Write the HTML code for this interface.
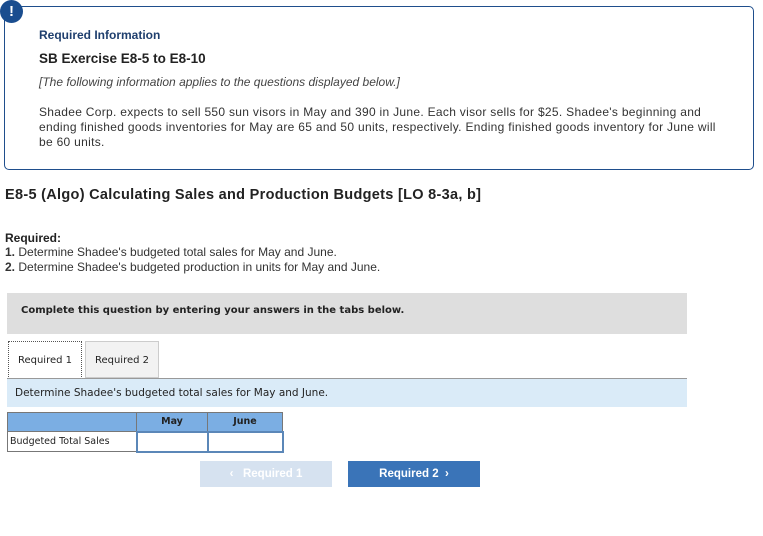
<!DOCTYPE html>
<html><head><style>
body{margin:0;width:763px;height:536px;background:#fff;font-family:"Liberation Sans",Arial,sans-serif;color:#222;position:relative;overflow:hidden}
.a{position:absolute}
.box{left:4px;top:6px;width:750px;height:164px;border:1px solid #1f4e8c;border-radius:5px;box-sizing:border-box}
.ic{left:0;top:0;width:23px;height:23px;border-radius:50%;background:#1a4d8f;color:#fff;font-weight:bold;font-size:15px;text-align:center;line-height:23px}
.v{font-family:"DejaVu Sans",Verdana,sans-serif}
</style></head><body>
<div class="a box"></div>
<div class="a ic">!</div>
<div class="a" style="left:39px;top:28px;font-size:12px;font-weight:bold;color:#1f3f6e">Required Information</div>
<div class="a" style="left:39px;top:51px;font-size:13.5px;font-weight:bold;color:#222">SB Exercise E8-5 to E8-10</div>
<div class="a" style="left:39px;top:75px;font-size:12px;font-style:italic;color:#444">[The following information applies to the questions displayed below.]</div>
<div class="a" style="left:39px;top:105px;width:700px;font-size:12px;letter-spacing:0.3px;line-height:15px;color:#333;white-space:nowrap">Shadee Corp. expects to sell 550 sun visors in May and 390 in June. Each visor sells for $25. Shadee's beginning and<br>ending finished goods inventories for May are 65 and 50 units, respectively. Ending finished goods inventory for June will<br>be 60 units.</div>
<div class="a" style="left:5px;top:187px;font-size:14.5px;letter-spacing:0.3px;font-weight:bold;color:#222">E8-5 (Algo) Calculating Sales and Production Budgets [LO 8-3a, b]</div>
<div class="a" style="left:5px;top:231px;font-size:12px;font-weight:bold">Required:</div>
<div class="a" style="left:5px;top:245px;font-size:12px;line-height:15px;color:#333"><b>1.</b> Determine Shadee's budgeted total sales for May and June.<br><b>2.</b> Determine Shadee's budgeted production in units for May and June.</div>
<div class="a" style="left:7px;top:293px;width:680px;height:41px;background:#dedede"></div>
<div class="a v" style="left:21px;top:305px;font-size:10px;font-weight:bold;color:#222">Complete this question by entering your answers in the tabs below.</div>
<div class="a v" style="left:8px;top:341px;width:74px;height:38px;border:1px dotted #555;border-bottom:none;box-sizing:border-box;background:#fff;font-size:10px;text-align:center;line-height:38px">Required 1</div>
<div class="a v" style="left:85px;top:341px;width:74px;height:37px;border:1px solid #ccc;box-sizing:border-box;background:#f2f2f2;font-size:10px;text-align:center;line-height:37px">Required 2</div>
<div class="a" style="left:7px;top:378px;width:680px;height:1px;background:#999"></div>
<div class="a v" style="left:7px;top:379px;width:680px;height:28px;background:#daebf8"></div>
<div class="a v" style="left:15px;top:387px;font-size:10.5px;color:#222">Determine Shadee's budgeted total sales for May and June.</div>
<table class="a v" style="left:7px;top:412px;border-collapse:collapse;font-size:9.5px">
<tr style="height:19px;background:#7baee3"><td style="width:126px;border:1px solid #777"></td><td style="width:68px;border:1px solid #777;text-align:center;font-weight:bold">May</td><td style="width:72px;border:1px solid #777;text-align:center;font-weight:bold">June</td></tr>
<tr style="height:20px"><td style="border:1px solid #777;padding-left:2px">Budgeted Total Sales</td><td style="border:2px solid #5b87b8"></td><td style="border:2px solid #5b87b8"></td></tr>
</table>
<div class="a" style="left:200px;top:461px;width:132px;height:26px;background:#d6e2f0;color:#fff;font-size:11.5px;font-weight:bold;text-align:center;line-height:26px">&lsaquo;&nbsp;&nbsp; Required 1</div>
<div class="a" style="left:348px;top:461px;width:132px;height:26px;background:#3a74b8;color:#fff;font-size:11.5px;font-weight:bold;text-align:center;line-height:26px">Required 2 &nbsp;&rsaquo;</div>
</body></html>
